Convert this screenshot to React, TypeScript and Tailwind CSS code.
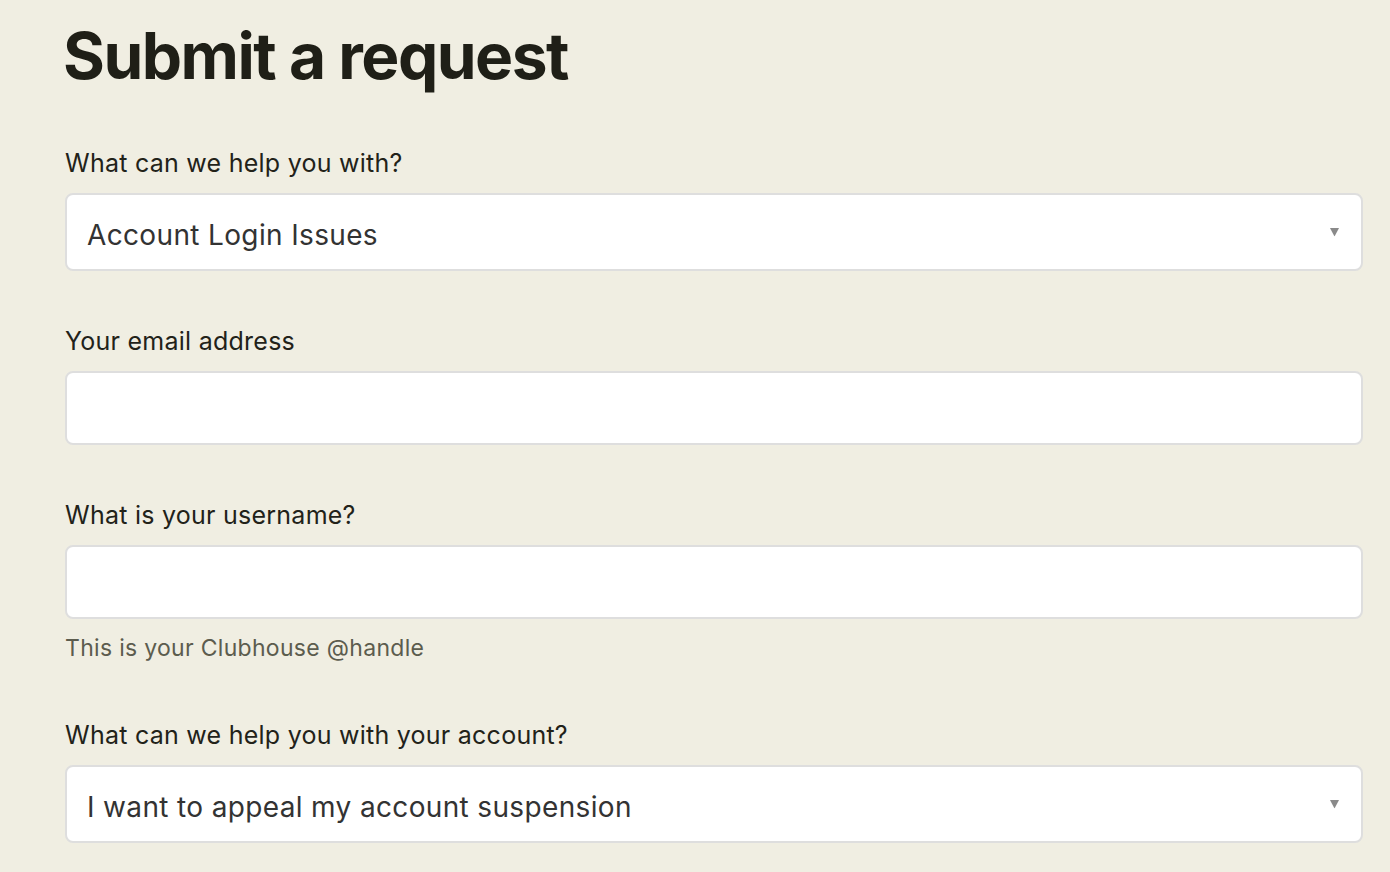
import React, { useState } from 'react';

const font = { fontFamily: 'Inter, "Noto Sans", "Liberation Sans", sans-serif' };

const Arrow: React.FC = () => (
  <svg
    className="pointer-events-none absolute right-[24px] top-1/2 -translate-y-1/2"
    width="9"
    height="9"
    viewBox="0 0 9 9"
  >
    <path d="M0 0.5 H9 L4.5 9 Z" fill="#8a8a8a" />
  </svg>
);

const Label: React.FC<{ children: React.ReactNode }> = ({ children }) => (
  <label className="block text-[25px] leading-[30px] tracking-[0.25px] text-[#222219]">{children}</label>
);

const Select: React.FC<{ value: string; options: string[]; onChange: (v: string) => void }> = ({ value, options, onChange }) => (
  <div className="relative mt-[15px]">
    <select
      value={value}
      onChange={e => onChange(e.target.value)}
      className="block h-[78px] w-full appearance-none rounded-[8px] border-2 border-[#dedede] bg-white pl-[20px] pr-12 pt-[6px] text-[28px] tracking-[0.35px] text-[#333] outline-none"
      style={font}
    >
      {options.map(o => (
        <option key={o}>{o}</option>
      ))}
    </select>
    <Arrow />
  </div>
);

const Input: React.FC = () => (
  <input
    type="text"
    className="mt-[15px] block h-[74px] w-full rounded-[8px] border-2 border-[#dedede] bg-white px-[20px] text-[28px] text-[#333] outline-none"
    style={font}
  />
);

export default function App() {
  const [topic, setTopic] = useState('Account Login Issues');
  const [issue, setIssue] = useState('I want to appeal my account suspension');

  return (
    <div className="min-h-[872px] bg-[#f0eee2] pl-[65px] pr-[27px] pt-[24px]" style={font}>
      <h1 className="-ml-[2px] text-[64px] font-bold leading-[64px] tracking-[-1.5px] text-[#1f1f17]">Submit a request</h1>

      <div className="mt-[60px]">
        <Label>What can we help you with?</Label>
        <Select
          value={topic}
          onChange={setTopic}
          options={['Account Login Issues', 'Report a User', 'Feature Request', 'Other']}
        />
      </div>

      <div className="mt-[55px]">
        <Label>Your email address</Label>
        <Input />
      </div>

      <div className="mt-[55px]">
        <Label>What is your username?</Label>
        <Input />
        <p className="mt-[14px] text-[23px] leading-[30px] tracking-[0.3px] text-[#5c5c4e]">This is your Clubhouse @handle</p>
      </div>

      <div className="mt-[57px]">
        <Label>What can we help you with your account?</Label>
        <Select
          value={issue}
          onChange={setIssue}
          options={['I want to appeal my account suspension', 'I forgot my password', 'Something else']}
        />
      </div>
    </div>
  );
}
